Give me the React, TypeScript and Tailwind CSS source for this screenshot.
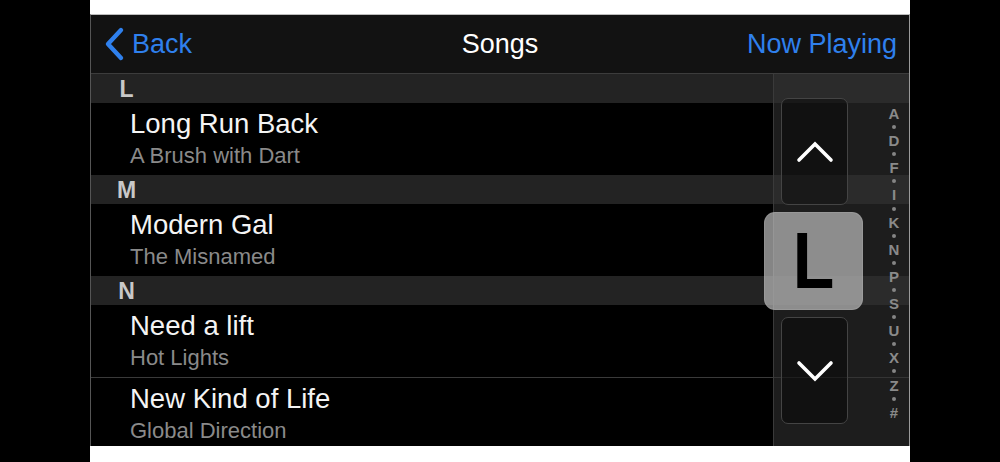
import React from "react";

const indexLetters = ["A", "D", "F", "I", "K", "N", "P", "S", "U", "X", "Z", "#"];

type Item =
  | { kind: "header"; letter: string }
  | { kind: "row"; title: string; subtitle: string; sep?: boolean };

const items: Item[] = [
  { kind: "header", letter: "L" },
  { kind: "row", title: "Long Run Back", subtitle: "A Brush with Dart" },
  { kind: "header", letter: "M" },
  { kind: "row", title: "Modern Gal", subtitle: "The Misnamed" },
  { kind: "header", letter: "N" },
  { kind: "row", title: "Need a lift", subtitle: "Hot Lights", sep: true },
  { kind: "row", title: "New Kind of Life", subtitle: "Global Direction" },
];

function SectionHeader({ letter }: { letter: string }) {
  return (
    <div className="h-[29px] shrink-0 bg-[#232323] pt-[1px]">
      <div className="ml-[24px] w-[23px] text-center text-[23px] leading-[29px] font-bold text-[#c8c8c8]">
        {letter}
      </div>
    </div>
  );
}

function SongRow({ title, subtitle, sep }: { title: string; subtitle: string; sep?: boolean }) {
  return (
    <div
      className={
        sep
          ? "h-[73px] shrink-0 bg-black pl-[39px] pt-[5px] border-b border-[#3a3a3a]"
          : "h-[72px] shrink-0 bg-black pl-[39px] pt-[5px]"
      }
    >
      <div className="text-[27.5px] leading-[32px] text-[#f4f4f4] whitespace-nowrap">{title}</div>
      <div className="mt-[3px] text-[22px] leading-[26px] text-[#8a8a8a] whitespace-nowrap">{subtitle}</div>
    </div>
  );
}

function Chevron({ dir }: { dir: "up" | "down" }) {
  return (
    <svg width="38" height="24" viewBox="0 0 38 24" fill="none">
      <polyline
        points={dir === "up" ? "3,20 19,4 35,20" : "3,4 19,20 35,4"}
        stroke="#ffffff"
        strokeWidth="3.6"
        strokeLinecap="round"
        strokeLinejoin="miter"
      />
    </svg>
  );
}

export default function App() {
  return (
    <div className="w-[1000px] h-[462px] bg-black flex font-['Liberation_Sans',Arial,sans-serif]">
      <div className="w-[90px] shrink-0" />
      <div className="w-[820px] shrink-0 bg-white pt-[14px] pb-[16px]">
        <div className="h-[432px] flex flex-col border-t border-l border-r border-t-[#bdbdbd] border-l-[#555555] border-r-[#9a9a9a] bg-black">
          {/* Navigation bar */}
          <div className="h-[59px] shrink-0 bg-[#121212] border-b border-[#3c3c3c] flex items-center justify-between px-[12px]">
            <div className="flex items-center text-[#2f80ed]">
              <svg width="22" height="36" viewBox="0 0 22 36" fill="none" className="mr-[7px]">
                <polyline
                  points="18,4 5,18 18,32"
                  stroke="#2f80ed"
                  strokeWidth="4.4"
                  strokeLinecap="round"
                  strokeLinejoin="round"
                />
              </svg>
              <span className="text-[27px] leading-[32px]">Back</span>
            </div>
            <span className="text-[27px] leading-[32px] text-white absolute left-[90px] w-[820px] text-center pointer-events-none">
              Songs
            </span>
            <span className="text-[27px] leading-[32px] text-[#2f80ed]">Now Playing</span>
          </div>

          {/* List + index overlay */}
          <div className="relative flex-1 overflow-hidden">
            <div className="flex flex-col">
              {items.map((it, i) =>
                it.kind === "header" ? (
                  <SectionHeader key={i} letter={it.letter} />
                ) : (
                  <SongRow key={i} title={it.title} subtitle={it.subtitle} sep={it.sep} />
                )
              )}
            </div>

            {/* Index panel overlay */}
            <div className="absolute top-0 right-0 bottom-0 w-[136px] bg-[#313131]/60 border-l border-[#3a3a3a] flex">
              <div className="w-[74px] pl-[7px] pt-[24px] pb-[22px] flex flex-col justify-between">
                <div className="h-[107px] w-[67px] rounded-[7px] border border-[#444444] bg-black/40 flex items-center justify-center">
                  <Chevron dir="up" />
                </div>
                <div className="h-[107px] w-[67px] rounded-[7px] border border-[#444444] bg-black/40 flex items-center justify-center">
                  <Chevron dir="down" />
                </div>
              </div>
              <div className="flex-1 flex justify-end pr-[5px]">
                <div className="mt-[32px] h-[314px] w-[20px] flex flex-col items-center justify-between">
                  {indexLetters.map((l, i) => (
                    <React.Fragment key={l}>
                      {i > 0 && <div className="w-[4px] h-[4px] rounded-full bg-[#858585]" />}
                      <div className="text-[15px] leading-[15px] font-bold text-[#8a8a8a]">{l}</div>
                    </React.Fragment>
                  ))}
                </div>
              </div>
            </div>

            {/* Letter badge */}
            <div className="absolute left-[673px] top-[138px] w-[99px] h-[98px] rounded-[11px] bg-[#bdbdbd]/70 border border-white/10 flex items-center justify-center">
              <span className="text-[80px] leading-[80px] font-bold text-black scale-x-[0.85] inline-block">L</span>
            </div>
          </div>
        </div>
      </div>
    </div>
  );
}
